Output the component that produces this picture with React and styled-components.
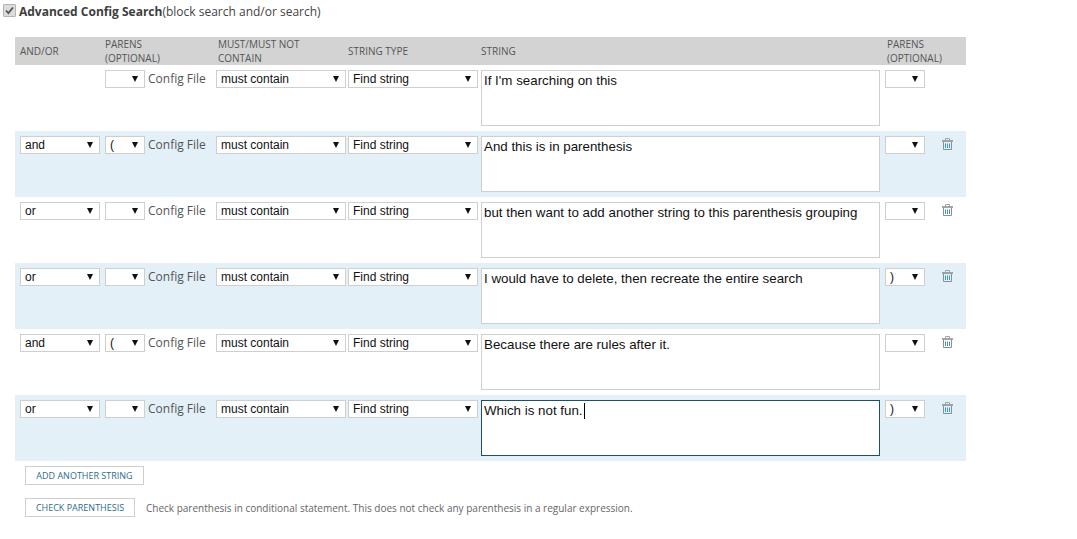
import React from 'react'
import styled, { createGlobalStyle } from 'styled-components'

const GlobalStyle = createGlobalStyle`
  html, body {
    margin: 0;
    padding: 0;
    background: #fff;
  }
`

const COLUMNS = '85px 40px 71px 132px 133px 404px 40px 41px'

const Page = styled.div`
  width: 1077px;
  height: 539px;
  overflow: hidden;
  font-family: "Open Sans", sans-serif;
  color: #444;
`

const TitleBar = styled.div`
  display: flex;
  align-items: center;
  height: 24px;
  padding-left: 3px;
  font-size: 12px;
  line-height: 24px;
`

const CheckBox = styled.span`
  width: 11px;
  height: 11px;
  margin-right: 4px;
  border: 1px solid #b4b4b4;
  border-radius: 1px;
  background: #dcdcdc;
  display: flex;
  align-items: center;
  justify-content: center;
  position: relative;
  top: -2px;
`

const Title = styled.strong`
  font-weight: 700;
  color: #3d3d3d;
  margin-left: -1px;
`

const Table = styled.div`
  width: 951px;
  margin: 13px 0 0 15px;
`

const HeaderRow = styled.div`
  display: grid;
  grid-template-columns: ${COLUMNS};
  height: 28px;
  padding-left: 5px;
  background: #d3d3d3;
  align-items: center;
  font-size: 10px;
  line-height: 14px;
  text-transform: uppercase;
  color: #555;
`

const HeaderCell = styled.div`
  grid-column: ${props => props.span || 'auto'};
  padding-left: ${props => props.inset || 0}px;
`

const Row = styled.div`
  display: grid;
  grid-template-columns: ${COLUMNS};
  align-items: start;
  height: 66px;
  box-sizing: border-box;
  padding: 5px 0 0 5px;
  background: ${props => props.shaded ? '#e3f0f8' : '#fff'};
`

const SelectBox = styled.div`
  position: relative;
  box-sizing: border-box;
  height: 18px;
  width: ${props => props.width}px;
  padding-left: 4px;
  border: 1px solid #cfcfcf;
  background: #fff;
  font-family: "Liberation Sans", Arial, sans-serif;
  font-size: 12px;
  line-height: 16px;
  color: #111;
  &::after {
    content: "";
    position: absolute;
    right: 6px;
    top: 5px;
    border-style: solid;
    border-width: 6px 3px 0;
    border-color: #111 transparent transparent;
  }
`

const ConfigLabel = styled.span`
  padding-left: 3px;
  font-size: 12px;
  line-height: 18px;
  color: #555;
  white-space: nowrap;
`

const StringBox = styled.div`
  box-sizing: border-box;
  height: 56px;
  width: 399px;
  padding: 2px;
  border: 1px solid ${props => props.focused ? '#1f4e66' : '#cfcfcf'};
  background: #fff;
  font-family: "Liberation Sans", Arial, sans-serif;
  font-size: 13.33px;
  line-height: 16px;
  color: #111;
`

const Caret = styled.span`
  display: inline-block;
  width: 1px;
  height: 16px;
  margin-left: 1px;
  background: #000;
  vertical-align: top;
`

const TrashButton = styled.span`
  display: flex;
  padding: 2px 0 0 17px;
`

const Actions = styled.div`
  display: flex;
  flex-direction: column;
  gap: 13px;
  margin: 5px 0 0 25px;
`

const ActionRow = styled.div`
  display: flex;
  align-items: center;
  gap: 11px;
`

const ActionButton = styled.button`
  box-sizing: border-box;
  height: 19px;
  width: ${props => props.width}px;
  padding: 0;
  border: 1px solid #cfcfcf;
  background: #fff;
  font-family: "Open Sans", sans-serif;
  font-size: 9px;
  text-transform: uppercase;
  color: #2f6c88;
`

const Hint = styled.span`
  font-size: 10px;
  color: #666;
`

const TrashIcon = () => (
  <svg width="11" height="12" viewBox="0 0 11 12" fill="none">
    <path d="M3.5 2V.5h4V2" stroke="#a0a4a7" />
    <path d="M0 3h11" stroke="#8a8f93" strokeWidth="1.6" />
    <path d="M1.5 4v7.5h8V4" stroke="#8a8f93" />
    <path d="M3.5 5.5v4.5M5.5 5.5v4.5M7.5 5.5v4.5" stroke="#3f97b4" />
  </svg>
)

const rows = [
  { text: "If I'm searching on this" },
  { join: 'and', open: '(', text: 'And this is in parenthesis', shaded: true },
  { join: 'or', text: 'but then want to add another string to this parenthesis grouping' },
  { join: 'or', close: ')', text: 'I would have to delete, then recreate the entire search', shaded: true },
  { join: 'and', open: '(', text: 'Because there are rules after it.' },
  { join: 'or', close: ')', text: 'Which is not fun.', shaded: true, focused: true }
]

const SearchRow = ({ row, first }) => (
  <Row shaded={row.shaded}>
    {first ? <span /> : <SelectBox width={80}>{row.join}</SelectBox>}
    <SelectBox width={40}>{row.open}</SelectBox>
    <ConfigLabel>Config File</ConfigLabel>
    <SelectBox width={130}>must contain</SelectBox>
    <SelectBox width={130}>Find string</SelectBox>
    <StringBox focused={row.focused}>
      {row.text}
      {row.focused && <Caret />}
    </StringBox>
    <SelectBox width={40}>{row.close}</SelectBox>
    {!first && <TrashButton><TrashIcon /></TrashButton>}
  </Row>
)

const App = () => (
  <Page>
    <GlobalStyle />
    <TitleBar>
      <CheckBox>
        <svg width="9" height="9" viewBox="0 0 9 9" fill="none">
          <path d="M1 4.5l2.4 2.6L8 1.5" stroke="#555" strokeWidth="1.8" />
        </svg>
      </CheckBox>
      <Title>Advanced Config Search</Title>(block search and/or search)
    </TitleBar>
    <Table>
      <HeaderRow>
        <HeaderCell>And/Or</HeaderCell>
        <HeaderCell span="2 / 4">Parens<br />(Optional)</HeaderCell>
        <HeaderCell inset={2}>Must/Must Not<br />Contain</HeaderCell>
        <HeaderCell>String Type</HeaderCell>
        <HeaderCell>String</HeaderCell>
        <HeaderCell inset={2} span="7 / 9">Parens<br />(Optional)</HeaderCell>
      </HeaderRow>
      {rows.map((row, i) => (
        <SearchRow key={i} row={row} first={i === 0} />
      ))}
    </Table>
    <Actions>
      <ActionRow>
        <ActionButton width={119}>Add Another String</ActionButton>
      </ActionRow>
      <ActionRow>
        <ActionButton width={110}>Check Parenthesis</ActionButton>
        <Hint>Check parenthesis in conditional statement. This does not check any parenthesis in a regular expression.</Hint>
      </ActionRow>
    </Actions>
  </Page>
)

export default App
